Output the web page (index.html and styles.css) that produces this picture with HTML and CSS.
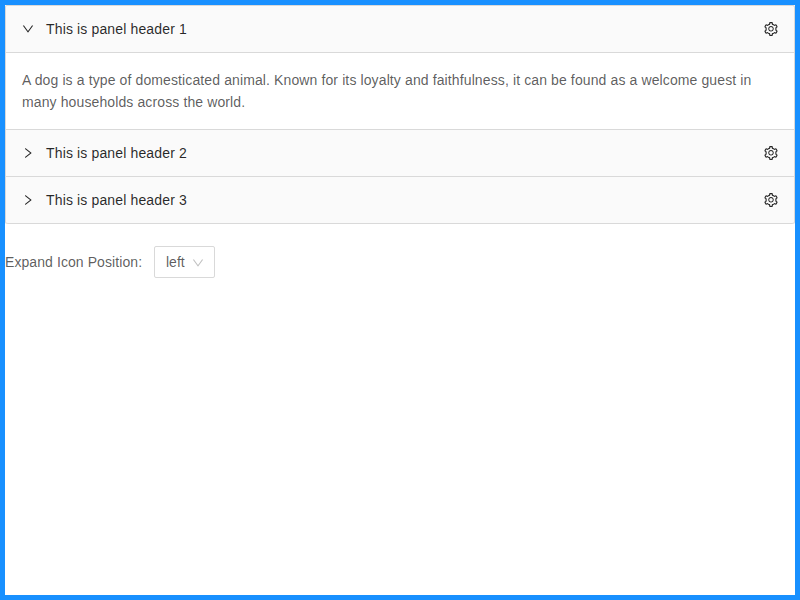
FILE: index.html
```html
<!DOCTYPE html>
<html lang="en">
<head>
<meta charset="utf-8">
<title>Collapse</title>
<link rel="stylesheet" href="styles.css">
</head>
<body>
<svg class="sprite" aria-hidden="true">
  <symbol id="down" viewBox="64 64 896 896"><path d="M884 256h-75c-5.1 0-9.9 2.5-12.9 6.6L512 654.2 227.9 262.6c-3-4.1-7.8-6.6-12.9-6.6h-75c-6.5 0-10.3 7.4-6.5 12.7l352.6 486.1c12.8 17.6 39 17.6 51.7 0l352.6-486.1c3.9-5.3.1-12.7-6.4-12.7z"/></symbol>
  <symbol id="right" viewBox="64 64 896 896"><path d="M765.7 486.8L314.9 134.7A7.97 7.97 0 00302 141v77.3c0 4.9 2.3 9.6 6.1 12.6l360 281.1-360 281.1c-3.9 3-6.1 7.7-6.1 12.6V883c0 6.7 7.7 10.4 12.9 6.3l450.8-352.1a31.96 31.96 0 000-50.4z"/></symbol>
  <symbol id="setting" viewBox="64 64 896 896"><path d="M924.8 625.7l-65.5-56c3.1-19 4.7-38.4 4.7-57.8s-1.6-38.8-4.7-57.8l65.5-56a32.03 32.03 0 009.3-35.2l-.9-2.6a443.74 443.74 0 00-79.7-137.9l-1.8-2.1a32.12 32.12 0 00-35.1-9.5l-81.3 28.9c-30-24.6-63.5-44-99.7-57.6l-15.7-85a32.05 32.05 0 00-25.8-25.7l-2.7-.5c-52.1-9.4-106.9-9.4-159 0l-2.7.5a32.05 32.05 0 00-25.8 25.7l-15.8 85.4a351.86 351.86 0 00-99 57.4l-81.9-29.1a32 32 0 00-35.1 9.5l-1.8 2.1a446.02 446.02 0 00-79.7 137.9l-.9 2.6c-4.5 12.5-.8 26.5 9.3 35.2l66.3 56.6c-3.1 18.8-4.6 38-4.6 57.1 0 19.2 1.5 38.4 4.6 57.1L99 625.5a32.03 32.03 0 00-9.3 35.2l.9 2.6c18.1 50.4 44.9 96.9 79.7 137.9l1.8 2.1a32.12 32.12 0 0035.1 9.5l81.9-29.1c29.8 24.5 63.1 43.9 99 57.4l15.8 85.4a32.05 32.05 0 0025.8 25.7l2.7.5a449.4 449.4 0 00159 0l2.7-.5a32.05 32.05 0 0025.8-25.7l15.7-85a350 350 0 0099.7-57.6l81.3 28.9a32 32 0 0035.1-9.5l1.8-2.1c34.8-41.1 61.6-87.5 79.7-137.9l.9-2.6c4.5-12.3.8-26.3-9.3-35zM788.3 465.9c2.5 15.1 3.8 30.6 3.8 46.1s-1.3 31-3.8 46.1l-6.6 40.1 74.7 63.9a370.03 370.03 0 01-42.6 73.6L721 702.8l-31.4 25.8c-23.9 19.6-50.5 35-79.3 45.8l-38.1 14.3-17.9 97a377.5 377.5 0 01-85 0l-17.9-97.2-37.8-14.5c-28.5-10.8-55-26.2-78.7-45.7l-31.4-25.9-93.4 33.2c-17-22.9-31.2-47.6-42.6-73.6l75.5-64.5-6.5-40c-2.4-14.9-3.7-30.3-3.7-45.5 0-15.3 1.2-30.6 3.7-45.5l6.5-40-75.5-64.5c11.3-26.1 25.6-50.7 42.6-73.6l93.4 33.2 31.4-25.9c23.7-19.5 50.2-34.9 78.7-45.7l37.9-14.3 17.9-97.2c28.1-3.2 56.8-3.2 85 0l17.9 97 38.1 14.3c28.7 10.8 55.4 26.2 79.3 45.8l31.4 25.8 92.8-32.9c17 22.9 31.2 47.6 42.6 73.6L781.8 426l6.5 39.9zM512 326c-97.2 0-176 78.8-176 176s78.8 176 176 176 176-78.8 176-176-78.8-176-176-176zm79.2 255.2A111.6 111.6 0 01512 614c-29.9 0-58-11.7-79.2-32.8A111.6 111.6 0 01400 502c0-29.9 11.7-58 32.8-79.2C454 401.6 482.1 390 512 390c29.9 0 58 11.6 79.2 32.8A111.6 111.6 0 01624 502c0 29.9-11.7 58-32.8 79.2z"/></symbol>
</svg>
<main class="page">
  <div class="collapse">
    <section class="panel">
      <header class="panel-header">
        <svg class="arrow"><use href="#down"/></svg>
        <span class="title">This is panel header 1</span>
        <svg class="setting"><use href="#setting"/></svg>
      </header>
      <div class="panel-content">A dog is a type of domesticated animal. Known for its loyalty and faithfulness, it can be found as a welcome guest in many households across the world.</div>
    </section>
    <section class="panel">
      <header class="panel-header">
        <svg class="arrow"><use href="#right"/></svg>
        <span class="title">This is panel header 2</span>
        <svg class="setting"><use href="#setting"/></svg>
      </header>
    </section>
    <section class="panel">
      <header class="panel-header">
        <svg class="arrow"><use href="#right"/></svg>
        <span class="title">This is panel header 3</span>
        <svg class="setting"><use href="#setting"/></svg>
      </header>
    </section>
  </div>
  <div class="position">
    <span class="label">Expand Icon Position:</span>
    <div class="select">
      <span>left</span>
      <svg class="caret"><use href="#down"/></svg>
    </div>
  </div>
</main>
</body>
</html>
```
FILE: styles.css
```css
* {
  box-sizing: border-box;
}

body {
  margin: 0;
  font-family: "Liberation Sans", Arial, sans-serif;
  font-size: 14px;
  line-height: 22px;
  color: rgba(0, 0, 0, 0.65);
  background: #fff;
}

.sprite {
  display: none;
}

.page {
  height: 100vh;
  border: 5px solid #1890ff;
}

.collapse {
  background: #fafafa;
  border: 1px solid #d9d9d9;
  border-bottom: 0;
  border-radius: 2px;
}

.panel {
  border-bottom: 1px solid #d9d9d9;
}

.panel:last-child {
  border-radius: 0 0 2px 2px;
}

.panel-header {
  display: flex;
  align-items: center;
  height: 46px;
  padding: 0 16px;
  color: rgba(0, 0, 0, 0.85);
}

.arrow {
  width: 12px;
  height: 12px;
  margin-right: 12px;
  fill: currentColor;
}

.title {
  flex: 1;
  letter-spacing: 0.145px;
}

.setting {
  width: 14px;
  height: 14px;
  fill: currentColor;
}

.panel-content {
  padding: 16px 36px 16px 16px;
  letter-spacing: 0.115px;
  background: #fff;
  border-top: 1px solid #d9d9d9;
}

.position {
  display: flex;
  align-items: center;
  gap: 12px;
  margin-top: 22px;
}

.label {
  width: 137px;
  letter-spacing: 0.08px;
  white-space: nowrap;
}

.select {
  display: flex;
  align-items: center;
  justify-content: space-between;
  width: 61px;
  height: 32px;
  padding: 0 10px 0 11px;
  background: #fff;
  border: 1px solid #d9d9d9;
  border-radius: 2px;
}

.caret {
  width: 12px;
  height: 12px;
  margin-top: 1px;
  fill: rgba(0, 0, 0, 0.25);
}
```
